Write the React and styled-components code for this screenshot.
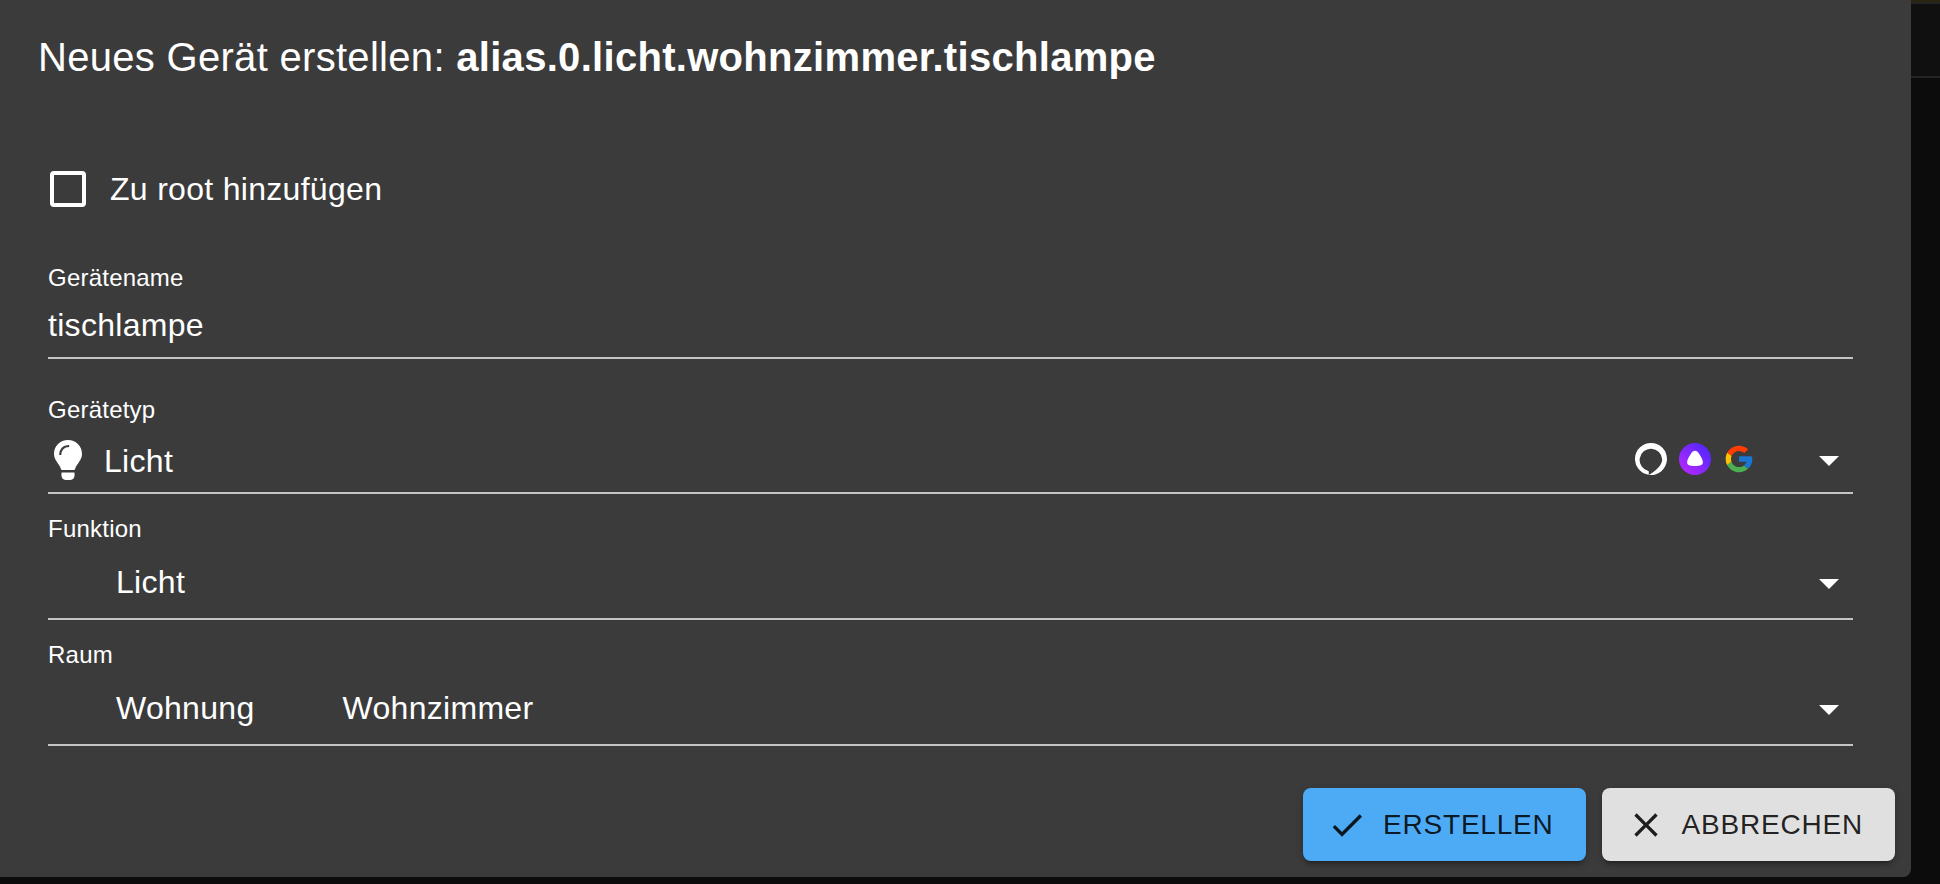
import React from "react";
import styled, { createGlobalStyle } from "styled-components";

const GlobalStyle = createGlobalStyle`
  * {
    box-sizing: border-box;
  }

  body {
    margin: 0;
    background-color: #0c0c0c;
    color: #fff;
    font-family: "Liberation Sans", Arial, sans-serif;
    overflow: hidden;
  }
`;

const Bulb = () => (
  <svg width="28" height="40" viewBox="0 0 28 40">
    <path
      fill="#fff"
      d="M14 0C6.2 0 0 6.1 0 13.7c0 3.4 1.3 5.9 3.1 8.5 1.9 2.7 3.300 4.600 3.900 7 .1.5.5.8 1 .8h12c.5 0 .9-.3 1-.8.6-2.400 2-4.300 3.900-7 1.800-2.600 3.100-5.100 3.100-8.500C28 6.100 21.800 0 14 0z"
    />
    <path
      fill="none"
      stroke="#3b3b3b"
      strokeWidth="2.200"
      d="M6.200 15c0-5.500 3.200-9 9-9"
    />
    <path fill="#fff" d="M7.500 32.500h13v3.100c0 2.800-1.800 4.400-4 4.400h-5c-2.200 0-4-1.600-4-4.400z" />
  </svg>
);

const Alexa = () => (
  <svg width="32" height="32" viewBox="0 0 32 32">
    <path
      fill="#fff"
      d="M16 0a16 16 0 0 0-2.200 31.850V28.700c0-.3-.2-.6-.5-.7a11.300 11.300 0 1 1 13.900-11.500c-.1 6.500-8.200 12.500-13.400 15.350A16 16 0 1 0 16 0z"
    />
  </svg>
);

const Alice = () => (
  <svg width="32" height="32" viewBox="0 0 32 32">
    <defs>
      <linearGradient id="alice" x1="0.1" y1="0.9" x2="0.9" y2="0.1">
        <stop offset="0" stopColor="#b428ff" />
        <stop offset="1" stopColor="#5027ff" />
      </linearGradient>
    </defs>
    <circle cx="16" cy="16" r="16" fill="url(#alice)" />
    <path
      fill="#fff"
      d="M16 7.700c-1.700 0-3 1.100-4.400 3.500C10 13.700 8.100 17 8.100 19.200c0 2.900 2.600 3.700 7.900 3.700s7.900-.8 7.900-3.700c0-2.200-1.900-5.500-3.500-8C19 8.800 17.700 7.700 16 7.700z"
    />
  </svg>
);

const Google = () => (
  <svg width="32" height="32" viewBox="0 0 48 48">
    <path
      fill="#1976D2"
      d="M43.611 20.083H42V20H24v8h11.303c-.792 2.237-2.231 4.166-4.087 5.571l6.190 5.238C36.971 39.205 44 34 44 24c0-1.341-.138-2.650-.389-3.917z"
    />
    <path
      fill="#FF3D00"
      d="M6.306 14.691l6.571 4.819C14.655 15.108 18.961 12 24 12c3.059 0 5.842 1.154 7.961 3.039l5.657-5.657C34.046 6.053 29.268 4 24 4 16.318 4 9.656 8.337 6.306 14.691z"
    />
    <path
      fill="#4CAF50"
      d="M24 44c5.166 0 9.860-1.977 13.409-5.192l-6.190-5.238C29.211 35.091 26.715 36 24 36c-5.202 0-9.619-3.317-11.283-7.946l-6.522 5.025C9.505 39.556 16.227 44 24 44z"
    />
    <path
      fill="#FFC107"
      d="M6.306 14.691C4.830 17.490 4 20.648 4 24c0 3.262.79 6.330 2.195 9.079l6.522-5.025A11.960 11.960 0 0 1 12 24c0-1.590.31-3.110.877-4.490z"
    />
  </svg>
);

const Check = () => (
  <svg width="40" height="40" viewBox="0 0 24 24" fill="currentColor">
    <path d="M9 16.170L4.830 12l-1.420 1.410L9 19 21 7l-1.410-1.410z" />
  </svg>
);

const Close = () => (
  <svg width="40" height="40" viewBox="0 0 24 24" fill="currentColor">
    <path d="M19 6.410L17.590 5 12 10.590 6.410 5 5 6.410 10.590 12 5 17.590 6.410 19 12 13.410 17.590 19 19 17.590 13.410 12z" />
  </svg>
);

const App = () => {
  return (
    <Screen>
      <GlobalStyle />
      <Dialog>
        <Title>
          Neues Gerät erstellen: <b>alias.0.licht.wohnzimmer.tischlampe</b>
        </Title>
        <Content>
          <CheckRow>
            <Checkbox />
            Zu root hinzufügen
          </CheckRow>
          <Field $height={97}>
            <Label>Gerätename</Label>
            <Value $height={62} $bottom={2}>
              tischlampe
            </Value>
          </Field>
          <Field $height={135} $top={35}>
            <Label>Gerätetyp</Label>
            <Value $height={64} $indent={6}>
              <Bulb />
              <TypeName>Licht</TypeName>
              <Assistants>
                <Alexa />
                <Alice />
                <Google />
              </Assistants>
              <Arrow $drop={2} />
            </Value>
          </Field>
          <Field $height={126} $top={19}>
            <Label>Funktion</Label>
            <Value $height={72} $indent={68}>
              Licht
              <Arrow $drop={4} />
            </Value>
          </Field>
          <Field $height={126} $top={19}>
            <Label>Raum</Label>
            <Value $height={72} $indent={68}>
              <Room>Wohnung</Room>
              <Room>Wohnzimmer</Room>
              <Arrow $drop={4} />
            </Value>
          </Field>
        </Content>
        <Actions>
          <Button $primary $width={283}>
            <Check />
            ERSTELLEN
          </Button>
          <Button $width={293}>
            <Close />
            ABBRECHEN
          </Button>
        </Actions>
      </Dialog>
      <Backdrop>
        <Stripe />
        <Toolbar />
      </Backdrop>
    </Screen>
  );
};

const Screen = styled.div`
  display: flex;
  height: 884px;
`;

const Dialog = styled.div`
  display: flex;
  flex-direction: column;
  width: 1911px;
  height: 877px;
  background-color: #3b3b3b;
  border-bottom-right-radius: 8px;
`;

const Title = styled.h2`
  margin: 0;
  padding: 33px 38px 0;
  height: 167px;
  font-size: 40px;
  font-weight: 400;
  line-height: 48px;
  letter-spacing: 0.0075em;
  white-space: nowrap;
`;

const Content = styled.div`
  width: 1853px;
  padding-left: 48px;
  letter-spacing: 0.3px;
`;

const CheckRow = styled.label`
  display: flex;
  align-items: center;
  gap: 24px;
  height: 95px;
  padding: 0 0 51px 2px;
  font-size: 32px;
`;

const Checkbox = styled.span`
  width: 36px;
  height: 36px;
  border: 4px solid #fff;
  border-radius: 4px;
`;

const Field = styled.div`
  display: flex;
  flex-direction: column;
  height: ${({ $height }) => $height}px;
  padding-top: ${({ $top }) => $top || 0}px;
  border-bottom: 2px solid #c4c4c4;
`;

const Label = styled.span`
  height: 32px;
  font-size: 24px;
  line-height: 32px;
  letter-spacing: 0.225px;
`;

const Value = styled.div`
  display: flex;
  align-items: center;
  height: ${({ $height }) => $height}px;
  margin-top: auto;
  padding: 0 14px ${({ $bottom }) => $bottom || 0}px
    ${({ $indent }) => $indent || 0}px;
  font-size: 32px;
`;

const TypeName = styled.span`
  padding: 2px 0 0 22px;
`;

const Assistants = styled.div`
  display: flex;
  gap: 12px;
  margin: 0 64px 2px auto;
`;

const Arrow = styled.span`
  width: 20px;
  height: 10px;
  margin-top: ${({ $drop }) => $drop}px;
  margin-left: auto;
  background-color: #fff;
  clip-path: polygon(0 0, 100% 0, 50% 100%);

  ${Assistants} + & {
    margin-left: 0;
  }
`;

const Room = styled.span`
  margin-right: 88px;
`;

const Actions = styled.div`
  display: flex;
  justify-content: flex-end;
  gap: 16px;
  padding: 0 16px 16px 0;
  margin-top: auto;
`;

const Button = styled.button`
  display: flex;
  align-items: center;
  gap: ${({ $primary }) => ($primary ? 16 : 15.5)}px;
  width: ${({ $width }) => $width}px;
  height: 73px;
  padding: 0 0 0 24px;
  border: none;
  border-radius: 8px;
  background-color: ${({ $primary }) => ($primary ? "#4dabf5" : "#e0e0e0")};
  color: rgba(0, 0, 0, 0.87);
  font-family: inherit;
  font-size: 28px;
  letter-spacing: 0.8px;
  box-shadow: 0 6px 2px -4px rgba(0, 0, 0, 0.2), 0 4px 4px rgba(0, 0, 0, 0.14),
    0 2px 10px rgba(0, 0, 0, 0.12);
`;

const Backdrop = styled.div`
  flex: 1;
`;

const Stripe = styled.div`
  height: 4px;
  background-color: #28240f;
  border-bottom: 2px solid #242424;
`;

const Toolbar = styled.div`
  height: 74px;
  background-color: #101010;
  border-bottom: 2px solid #242424;
`;

export default App;
